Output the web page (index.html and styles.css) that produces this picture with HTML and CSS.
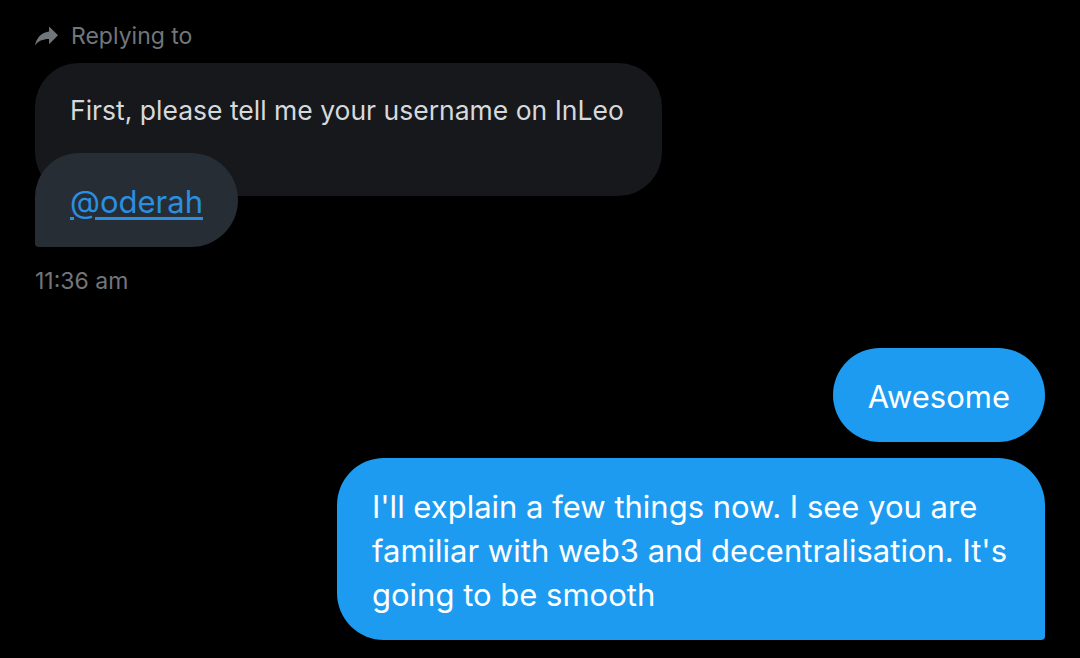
FILE: index.html
```html
<!DOCTYPE html>
<html lang="en">
<head>
    <meta charset="UTF-8">
    <meta name="viewport" content="width=device-width, initial-scale=1.0">
    <title>Messages</title>
    <link rel="stylesheet" href="styles.css">
</head>
<body>
    <div class="chat">
        <div class="replying">
            <svg class="reply-icon" viewBox="3 5 18 15" width="23" height="20">
                <path d="M14 9V5l7 7-7 7v-4.1c-5 0-8.5 1.6-11 5.1 1-5 4-10 11-11z"/>
            </svg>
            <span>Replying to</span>
        </div>

        <div class="incoming">
            <div class="quoted">First, please tell me your username on InLeo</div>
            <div class="bubble bubble-in"><a href="#">@oderah</a></div>
            <div class="time">11:36 am</div>
        </div>

        <div class="outgoing">
            <div class="bubble bubble-out">Awesome</div>
            <div class="bubble bubble-out last">I'll explain a few things now. I see you are familiar with web3 and decentralisation. It's going to be smooth</div>
        </div>
    </div>
</body>
</html>
```

FILE: styles.css
```css
body {
    margin: 0;
    padding: 0;
    background-color: #000;
    font-family: Inter, Roboto, sans-serif;
    color: #e7e9ea;
}

.chat {
    padding: 0 35px;
}

.replying {
    display: flex;
    align-items: center;
    gap: 13px;
    padding-top: 20px;
    height: 32px;
    font-size: 23px;
    line-height: 32px;
    color: #71767b;
}

.reply-icon {
    fill: #71767b;
}

.incoming {
    display: flex;
    flex-direction: column;
    align-items: flex-start;
}

.quoted {
    margin-top: 11px;
    padding: 27px 38px 66px 35px;
    background-color: #16181c;
    border-radius: 44px;
    font-size: 26.5px;
    line-height: 40px;
    color: #d6d9dc;
}

.bubble {
    padding: 27px 35px 23px 35px;
    font-size: 31px;
    line-height: 44px;
    border-radius: 47px;
}

.bubble-in {
    margin-top: -43px;
    background-color: #262d34;
    border-radius: 44px 47px 47px 4px;
}

.bubble-in a {
    color: #2b8fe0;
    text-decoration: underline;
    text-underline-offset: 4px;
}

.time {
    margin-top: 19px;
    font-size: 23px;
    line-height: 30px;
    color: #71767b;
}

.outgoing {
    display: flex;
    flex-direction: column;
    align-items: flex-end;
    gap: 16px;
    margin-top: 52px;
}

.bubble-out {
    background-color: #1d9bf0;
    color: #fff;
    max-width: 638px;
}

.bubble-out.last {
    border-radius: 47px 47px 4px 47px;
}
```
